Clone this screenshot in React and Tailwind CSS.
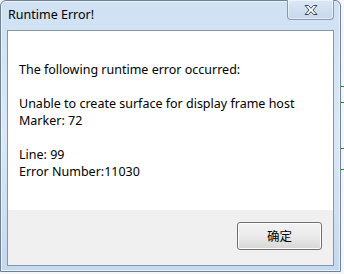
import React from 'react';

const BODY_FONT = { fontFamily: '"Noto Sans", "Noto Sans CJK SC", sans-serif' };

function CloseGlyph() {
  return (
    <svg width="16" height="12" viewBox="0 0 16 12">
      <path
        d="M2 1.5 L5.5 1.5 L8 4.3 L10.5 1.5 L14 1.5 L9.9 6 L14 10.5 L10.5 10.5 L8 7.7 L5.5 10.5 L2 10.5 L6.1 6 Z"
        fill="#ffffff"
        stroke="#3b4a5c"
        strokeWidth="1"
        strokeLinejoin="round"
      />
    </svg>
  );
}

export default function App() {
  return (
    <div className="w-[344px] h-[274px] bg-[#f4f6f8] overflow-hidden flex flex-col" style={BODY_FONT}>
      <div className="flex">
        {/* window frame */}
        <div className="w-[341px] h-[272px] flex flex-col rounded-t-[6px] border border-[#6f8195] bg-gradient-to-b from-[#cfe1f3] via-[#dae8f6] to-[#c4d9ef] shadow-[inset_0_0_0_1px_rgba(255,255,255,0.6)]">
          {/* title bar */}
          <div className="h-[29px] flex items-start justify-between pl-[7px] pr-[6px]">
            <span className="mt-[5px] text-[12.5px] text-black leading-[18px]">Runtime Error!</span>
            <div className="w-[47px] h-[20px] -mt-px flex items-center justify-center rounded-b-[4px] border border-t-0 border-[#8a9bb0] bg-gradient-to-b from-[#dbe7f4] to-[#c6d8ec] shadow-[inset_0_0_0_1px_rgba(255,255,255,0.5)]">
              <CloseGlyph />
            </div>
          </div>
          {/* client area */}
          <div className="mx-[6px] h-[236px] flex flex-col border border-[#8795a6] bg-white">
            <div className="h-[179px] pl-[11px] pt-[30px] text-[12.5px] leading-[17px] text-black">
              <p>The following runtime error occurred:</p>
              <p className="mt-[17px]">Unable to create surface for display frame host</p>
              <p>Marker: 72</p>
              <p className="mt-[17px]">Line: 99</p>
              <p>Error Number:11030</p>
            </div>
            <div className="flex-1 bg-[#f0f0f0] flex items-start justify-end pr-[11px] pt-[12px]">
              <button
                className="w-[85px] h-[28px] rounded-[3px] border border-[#707070] bg-gradient-to-b from-[#f2f2f2] via-[#ebebeb] to-[#d6d6d6] text-[12.5px] text-black shadow-[inset_0_0_0_1px_#fcfcfc]"
                style={{ fontFamily: '"Noto Sans CJK SC", sans-serif' }}
              >
                确定
              </button>
            </div>
          </div>
        </div>
        {/* background strip on the right */}
        <div className="w-[3px] h-[272px] flex flex-col">
          <div className="h-[86px]" />
          <div className="h-px w-[3px] bg-[#1a8a1a]" />
          <div className="h-[15px]" />
          <div className="h-px w-[3px] bg-[#1a8a1a]" />
          <div className="h-[45px]" />
          <div className="h-px w-[3px] bg-[#1a8a1a]" />
          <div className="h-[20px]" />
          <div className="h-px w-[3px] bg-[#1a8a1a]" />
        </div>
      </div>
    </div>
  );
}
